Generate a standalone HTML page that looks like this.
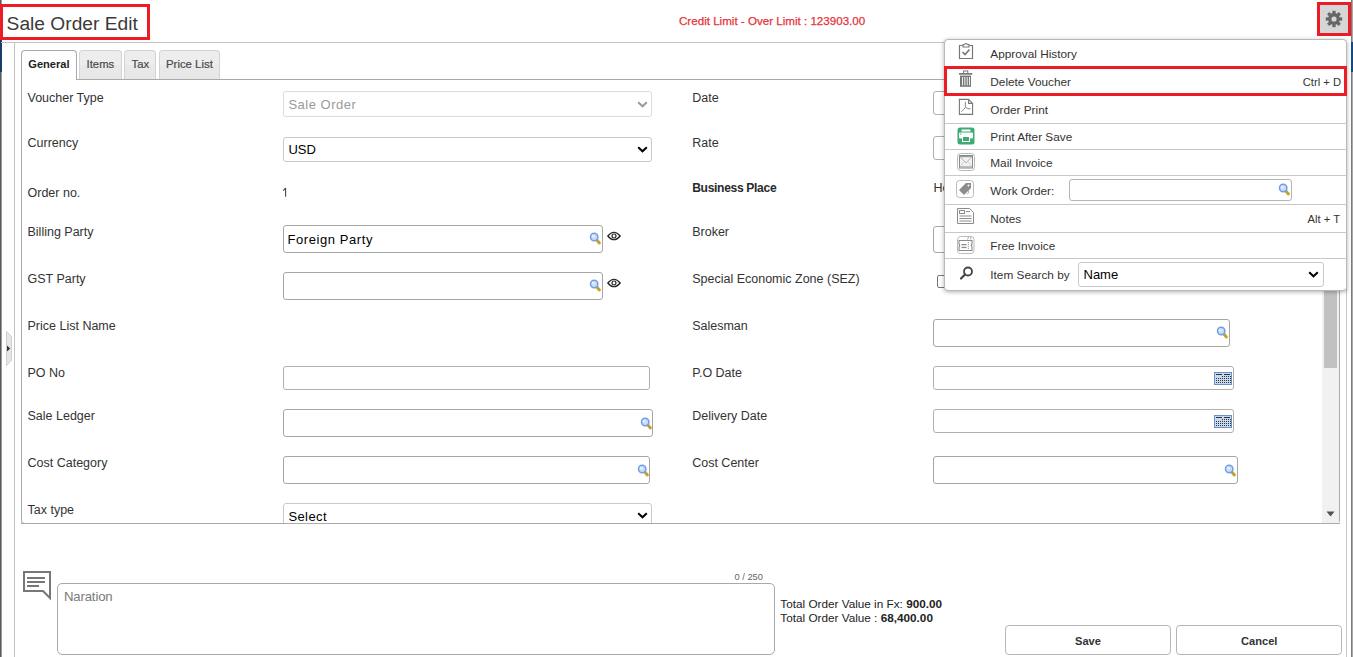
<!DOCTYPE html>
<html><head><meta charset="utf-8"><title>Sale Order Edit</title>
<style>
html,body{margin:0;padding:0;}
body{width:1353px;height:657px;overflow:hidden;position:relative;background:#fff;font-family:"Liberation Sans",sans-serif;}
.a{position:absolute;}
.t{position:absolute;line-height:1;white-space:nowrap;font-family:"Liberation Sans",sans-serif;}
svg.a{overflow:visible;}
</style></head><body>
<div class="a" style="left:0px;top:0px;width:1px;height:657px;background:#5a5a5a"></div>
<div class="a" style="left:1px;top:0px;width:1px;height:657px;background:#9a9a9a"></div>
<div class="a" style="left:0px;top:40px;width:2px;height:32px;background:#173e6b"></div>
<div class="a" style="left:1351px;top:0px;width:1px;height:657px;background:#7a7a7a"></div>
<div class="a" style="left:1352px;top:0px;width:1px;height:657px;background:#a8a8a8"></div>
<div class="a" style="left:1351px;top:42px;width:2px;height:30px;background:#0f4c86"></div>
<div class="a" style="left:0px;top:4px;width:150px;height:36px;border:3px solid #ed1c24;box-sizing:border-box"></div>
<div class="t" style="left:6.6px;top:14.35px;font-size:19.2px;color:#3a3a3a;font-weight:normal;">Sale Order Edit</div>
<div class="t" style="left:679px;top:14.98px;font-size:11.6px;color:#e5333a;font-weight:normal;-webkit-text-stroke:0.25px #e5333a;">Credit Limit - Over Limit : 123903.00</div>
<div class="a" style="left:1317px;top:2px;width:34px;height:34px;border:3px solid #ed1c24;box-sizing:border-box;background:#d6d6d6"></div>
<svg class="a" style="left:1325px;top:10px" width="18" height="18" viewBox="0 0 18 18">
<g fill="#666" transform="translate(9 9)">
<circle r="5.9"/>
<rect x="-1.6" y="-8.2" width="3.2" height="3.6" />
<rect x="-1.6" y="-8.2" width="3.2" height="3.6" transform="rotate(45)"/>
<rect x="-1.6" y="-8.2" width="3.2" height="3.6" transform="rotate(90)"/>
<rect x="-1.6" y="-8.2" width="3.2" height="3.6" transform="rotate(135)"/>
<rect x="-1.6" y="-8.2" width="3.2" height="3.6" transform="rotate(180)"/>
<rect x="-1.6" y="-8.2" width="3.2" height="3.6" transform="rotate(225)"/>
<rect x="-1.6" y="-8.2" width="3.2" height="3.6" transform="rotate(270)"/>
<rect x="-1.6" y="-8.2" width="3.2" height="3.6" transform="rotate(315)"/>
</g><circle cx="9" cy="9" r="2.6" fill="#d6d6d6"/></svg>
<div class="a" style="left:1px;top:42px;width:1346px;height:1px;background:#c4c4c4"></div>
<div class="a" style="left:14px;top:42px;width:1px;height:615px;background:#c4c4c4"></div>
<div class="a" style="left:1346px;top:42px;width:1px;height:615px;background:#c4c4c4"></div>
<svg class="a" style="left:6px;top:331px" width="7" height="36" viewBox="0 0 7 36"><path d="M0.5 0.5 L5.5 5.5 V29.5 L0.5 34.5Z" fill="#e6e6e6" stroke="#d0d0d0"/><path d="M1 14.5 L4.2 17.5 L1 20.5Z" fill="#333"/></svg>
<div class="a" style="left:21px;top:79px;width:1319px;height:445px;border:1px solid #aaa;border-top:1px solid #a9a9a9;box-sizing:border-box;border-radius:0 0 4px 4px;background:#fff"></div>
<div class="a" style="left:21px;top:50px;width:56px;height:30px;border:1px solid #aaa;border-bottom:none;box-sizing:border-box;border-radius:4px 4px 0 0;background:#fff"></div>
<div class="a" style="left:79px;top:50px;width:43px;height:29px;border:1px solid #d3d3d3;border-bottom:none;box-sizing:border-box;border-radius:4px 4px 0 0;background:linear-gradient(#ededed 0,#ededed 50%,#e8e8e8 50%,#e8e8e8 100%)"></div>
<div class="a" style="left:124px;top:50px;width:32px;height:29px;border:1px solid #d3d3d3;border-bottom:none;box-sizing:border-box;border-radius:4px 4px 0 0;background:linear-gradient(#ededed 0,#ededed 50%,#e8e8e8 50%,#e8e8e8 100%)"></div>
<div class="a" style="left:159px;top:50px;width:61px;height:29px;border:1px solid #d3d3d3;border-bottom:none;box-sizing:border-box;border-radius:4px 4px 0 0;background:linear-gradient(#ededed 0,#ededed 50%,#e8e8e8 50%,#e8e8e8 100%)"></div>
<div class="t" style="left:28.3px;top:58.80px;font-size:11.1px;color:#222;font-weight:bold;">General</div>
<div class="t" style="left:86.6px;top:58.63px;font-size:11.3px;color:#4a4a4a;font-weight:normal;-webkit-text-stroke:0.2px #4a4a4a;">Items</div>
<div class="t" style="left:131.5px;top:58.63px;font-size:11.3px;color:#4a4a4a;font-weight:normal;-webkit-text-stroke:0.2px #4a4a4a;">Tax</div>
<div class="t" style="left:166px;top:58.55px;font-size:11.4px;color:#4a4a4a;font-weight:normal;-webkit-text-stroke:0.2px #4a4a4a;">Price List</div>
<div class="t" style="left:27.5px;top:91.82px;font-size:12.5px;color:#333;font-weight:normal;">Voucher Type</div>
<div class="t" style="left:27.5px;top:136.62px;font-size:12.5px;color:#333;font-weight:normal;">Currency</div>
<div class="t" style="left:27.5px;top:187.32px;font-size:12.5px;color:#333;font-weight:normal;">Order no.</div>
<div class="t" style="left:27.5px;top:225.62px;font-size:12.5px;color:#333;font-weight:normal;">Billing Party</div>
<div class="t" style="left:27.5px;top:272.62px;font-size:12.5px;color:#333;font-weight:normal;">GST Party</div>
<div class="t" style="left:27.5px;top:319.52px;font-size:12.5px;color:#333;font-weight:normal;">Price List Name</div>
<div class="t" style="left:27.5px;top:366.52px;font-size:12.5px;color:#333;font-weight:normal;">PO No</div>
<div class="t" style="left:27.5px;top:409.72px;font-size:12.5px;color:#333;font-weight:normal;">Sale Ledger</div>
<div class="t" style="left:27.5px;top:456.62px;font-size:12.5px;color:#333;font-weight:normal;">Cost Category</div>
<div class="t" style="left:27.5px;top:504.22px;font-size:12.5px;color:#333;font-weight:normal;">Tax type</div>
<div class="t" style="left:692.2px;top:91.62px;font-size:12.5px;color:#333;font-weight:normal;">Date</div>
<div class="t" style="left:692.2px;top:136.62px;font-size:12.5px;color:#333;font-weight:normal;">Rate</div>
<div class="t" style="left:692.2px;top:225.62px;font-size:12.5px;color:#333;font-weight:normal;">Broker</div>
<div class="t" style="left:692.2px;top:272.82px;font-size:12.5px;color:#333;font-weight:normal;">Special Economic Zone (SEZ)</div>
<div class="t" style="left:692.2px;top:319.92px;font-size:12.5px;color:#333;font-weight:normal;">Salesman</div>
<div class="t" style="left:692.2px;top:366.92px;font-size:12.5px;color:#333;font-weight:normal;">P.O Date</div>
<div class="t" style="left:692.2px;top:409.92px;font-size:12.5px;color:#333;font-weight:normal;">Delivery Date</div>
<div class="t" style="left:692.2px;top:456.92px;font-size:12.5px;color:#333;font-weight:normal;">Cost Center</div>
<div class="t" style="left:692.2px;top:182.06px;font-size:12.1px;color:#2a2a2a;font-weight:bold;letter-spacing:-0.33px;">Business Place</div>
<svg class="a" style="left:282px;top:187px" width="6" height="11" viewBox="0 0 6 11"><path d="M3.6 1 V9.8 M3.6 1.2 L1.2 3.6" fill="none" stroke="#444" stroke-width="1.1"/></svg>
<div class="t" style="left:933.5px;top:181.82px;font-size:12.5px;color:#333;font-weight:normal;">Head Office</div>
<div class="a" style="left:283px;top:91px;width:369px;height:26px;border:1px solid #dcdcdc;box-sizing:border-box;border-radius:3px;background:#fff"></div>
<div class="t" style="left:288.4px;top:97.90px;font-size:13px;color:#9a9a9a;font-weight:normal;letter-spacing:0.5px;">Sale Order</div>
<svg class="a" style="left:636.5px;top:100.5px" width="11" height="7" viewBox="0 0 11 7"><path d="M1.2 1.2 L5.5 5.3 L9.8 1.2" fill="none" stroke="#9a9a9a" stroke-width="2"/></svg>
<div class="a" style="left:283px;top:137px;width:369px;height:25px;border:1px solid #c9c9c9;box-sizing:border-box;border-radius:3px;background:#fff"></div>
<div class="t" style="left:288.4px;top:143.10px;font-size:13px;color:#000;font-weight:normal;">USD</div>
<svg class="a" style="left:636.5px;top:146px" width="11" height="7" viewBox="0 0 11 7"><path d="M1.2 1.2 L5.5 5.3 L9.8 1.2" fill="none" stroke="#000" stroke-width="2"/></svg>
<div class="a" style="left:283px;top:225px;width:320px;height:28px;border:1px solid #a6a6a6;box-sizing:border-box;border-radius:3px;background:#fff"></div>
<div class="t" style="left:287.4px;top:233.40px;font-size:13px;color:#000;font-weight:normal;letter-spacing:0.58px;">Foreign Party</div>
<svg class="a" style="left:589px;top:232px" width="12" height="12" viewBox="0 0 12 12">
<line x1="7.4" y1="7.6" x2="10.4" y2="10.9" stroke="#c4a12a" stroke-width="3" stroke-linecap="round"/>
<circle cx="5.2" cy="5" r="3.7" fill="#c9dbf7" stroke="#6f9de8" stroke-width="1.5"/>
<circle cx="4.2" cy="4.2" r="1.4" fill="#e8f0fc"/></svg>
<svg class="a" style="left:607px;top:231px" width="14" height="10" viewBox="0 0 14 10">
<path d="M0.8 5 Q7 -2.5 13.2 5 Q7 12.5 0.8 5Z" fill="none" stroke="#222" stroke-width="1.2"/>
<circle cx="7" cy="5" r="2" fill="none" stroke="#222" stroke-width="1.2"/></svg>
<div class="a" style="left:283px;top:272px;width:320px;height:28px;border:1px solid #a6a6a6;box-sizing:border-box;border-radius:3px;background:#fff"></div>
<svg class="a" style="left:589px;top:279px" width="12" height="12" viewBox="0 0 12 12">
<line x1="7.4" y1="7.6" x2="10.4" y2="10.9" stroke="#c4a12a" stroke-width="3" stroke-linecap="round"/>
<circle cx="5.2" cy="5" r="3.7" fill="#c9dbf7" stroke="#6f9de8" stroke-width="1.5"/>
<circle cx="4.2" cy="4.2" r="1.4" fill="#e8f0fc"/></svg>
<svg class="a" style="left:607px;top:278px" width="14" height="10" viewBox="0 0 14 10">
<path d="M0.8 5 Q7 -2.5 13.2 5 Q7 12.5 0.8 5Z" fill="none" stroke="#222" stroke-width="1.2"/>
<circle cx="7" cy="5" r="2" fill="none" stroke="#222" stroke-width="1.2"/></svg>
<div class="a" style="left:283px;top:366px;width:367px;height:24px;border:1px solid #b0b0b0;box-sizing:border-box;border-radius:3px;background:#fff"></div>
<div class="a" style="left:283px;top:409px;width:370px;height:28px;border:1px solid #a6a6a6;box-sizing:border-box;border-radius:3px;background:#fff"></div>
<svg class="a" style="left:640px;top:417px" width="12" height="12" viewBox="0 0 12 12">
<line x1="7.4" y1="7.6" x2="10.4" y2="10.9" stroke="#c4a12a" stroke-width="3" stroke-linecap="round"/>
<circle cx="5.2" cy="5" r="3.7" fill="#c9dbf7" stroke="#6f9de8" stroke-width="1.5"/>
<circle cx="4.2" cy="4.2" r="1.4" fill="#e8f0fc"/></svg>
<div class="a" style="left:283px;top:456px;width:367px;height:28px;border:1px solid #a6a6a6;box-sizing:border-box;border-radius:3px;background:#fff"></div>
<svg class="a" style="left:637px;top:464px" width="12" height="12" viewBox="0 0 12 12">
<line x1="7.4" y1="7.6" x2="10.4" y2="10.9" stroke="#c4a12a" stroke-width="3" stroke-linecap="round"/>
<circle cx="5.2" cy="5" r="3.7" fill="#c9dbf7" stroke="#6f9de8" stroke-width="1.5"/>
<circle cx="4.2" cy="4.2" r="1.4" fill="#e8f0fc"/></svg>
<div class="a" style="left:283px;top:503px;width:369px;height:37px;border:1px solid #c9c9c9;box-sizing:border-box;border-radius:3px;background:#fff"></div>
<div class="t" style="left:288.4px;top:509.90px;font-size:13px;color:#000;font-weight:normal;letter-spacing:0.4px;">Select</div>
<svg class="a" style="left:636.5px;top:512px" width="11" height="7" viewBox="0 0 11 7"><path d="M1.2 1.2 L5.5 5.3 L9.8 1.2" fill="none" stroke="#000" stroke-width="2"/></svg>
<div class="a" style="left:933px;top:91px;width:307px;height:24px;border:1px solid #b0b0b0;box-sizing:border-box;border-radius:3px;background:#fff"></div>
<div class="a" style="left:933px;top:136px;width:307px;height:24px;border:1px solid #b0b0b0;box-sizing:border-box;border-radius:3px;background:#fff"></div>
<div class="a" style="left:933px;top:226px;width:307px;height:27px;border:1px solid #a6a6a6;box-sizing:border-box;border-radius:3px;background:#fff"></div>
<div class="a" style="left:937px;top:275px;width:12px;height:13px;border:1px solid #767676;box-sizing:border-box;border-radius:2px;background:#fff"></div>
<div class="a" style="left:933px;top:319px;width:297px;height:28px;border:1px solid #a6a6a6;box-sizing:border-box;border-radius:3px;background:#fff"></div>
<svg class="a" style="left:1216px;top:326px" width="12" height="12" viewBox="0 0 12 12">
<line x1="7.4" y1="7.6" x2="10.4" y2="10.9" stroke="#c4a12a" stroke-width="3" stroke-linecap="round"/>
<circle cx="5.2" cy="5" r="3.7" fill="#c9dbf7" stroke="#6f9de8" stroke-width="1.5"/>
<circle cx="4.2" cy="4.2" r="1.4" fill="#e8f0fc"/></svg>
<div class="a" style="left:933px;top:366px;width:301px;height:24px;border:1px solid #b0b0b0;box-sizing:border-box;border-radius:3px;background:#fff"></div>
<svg class="a" style="left:1214px;top:372px" width="18" height="13" viewBox="0 0 18 13">
<rect x="0.5" y="0.5" width="17" height="12" fill="#c7d9f1" stroke="#6a91c9"/>
<rect x="2" y="2" width="6" height="1" fill="#333"/><rect x="10" y="2" width="6" height="1" fill="#333"/><rect x="8" y="4" width="1" height="1" fill="#333"/><rect x="10" y="4" width="1" height="1" fill="#333"/><rect x="12" y="4" width="1" height="1" fill="#333"/><rect x="14" y="4" width="1" height="1" fill="#333"/><rect x="16" y="4" width="1" height="1" fill="#333"/><rect x="2" y="6" width="1" height="1" fill="#333"/><rect x="4" y="6" width="1" height="1" fill="#333"/><rect x="6" y="6" width="1" height="1" fill="#333"/><rect x="8" y="6" width="1" height="1" fill="#333"/><rect x="10" y="6" width="1" height="1" fill="#333"/><rect x="12" y="6" width="1" height="1" fill="#333"/><rect x="14" y="6" width="1" height="1" fill="#333"/><rect x="16" y="6" width="1" height="1" fill="#333"/><rect x="2" y="8" width="1" height="1" fill="#333"/><rect x="4" y="8" width="1" height="1" fill="#333"/><rect x="6" y="8" width="1" height="1" fill="#333"/><rect x="8" y="8" width="1" height="1" fill="#333"/><rect x="10" y="8" width="1" height="1" fill="#333"/><rect x="12" y="8" width="1" height="1" fill="#333"/><rect x="14" y="8" width="1" height="1" fill="#333"/><rect x="16" y="8" width="1" height="1" fill="#333"/><rect x="2" y="10" width="1" height="1" fill="#333"/><rect x="4" y="10" width="1" height="1" fill="#333"/><rect x="6" y="10" width="1" height="1" fill="#333"/><rect x="8" y="10" width="1" height="1" fill="#333"/><rect x="10" y="10" width="1" height="1" fill="#333"/><rect x="12" y="10" width="1" height="1" fill="#333"/><rect x="14" y="10" width="1" height="1" fill="#333"/><rect x="16" y="10" width="1" height="1" fill="#333"/></svg>
<div class="a" style="left:933px;top:409px;width:301px;height:24px;border:1px solid #b0b0b0;box-sizing:border-box;border-radius:3px;background:#fff"></div>
<svg class="a" style="left:1214px;top:415px" width="18" height="13" viewBox="0 0 18 13">
<rect x="0.5" y="0.5" width="17" height="12" fill="#c7d9f1" stroke="#6a91c9"/>
<rect x="2" y="2" width="6" height="1" fill="#333"/><rect x="10" y="2" width="6" height="1" fill="#333"/><rect x="8" y="4" width="1" height="1" fill="#333"/><rect x="10" y="4" width="1" height="1" fill="#333"/><rect x="12" y="4" width="1" height="1" fill="#333"/><rect x="14" y="4" width="1" height="1" fill="#333"/><rect x="16" y="4" width="1" height="1" fill="#333"/><rect x="2" y="6" width="1" height="1" fill="#333"/><rect x="4" y="6" width="1" height="1" fill="#333"/><rect x="6" y="6" width="1" height="1" fill="#333"/><rect x="8" y="6" width="1" height="1" fill="#333"/><rect x="10" y="6" width="1" height="1" fill="#333"/><rect x="12" y="6" width="1" height="1" fill="#333"/><rect x="14" y="6" width="1" height="1" fill="#333"/><rect x="16" y="6" width="1" height="1" fill="#333"/><rect x="2" y="8" width="1" height="1" fill="#333"/><rect x="4" y="8" width="1" height="1" fill="#333"/><rect x="6" y="8" width="1" height="1" fill="#333"/><rect x="8" y="8" width="1" height="1" fill="#333"/><rect x="10" y="8" width="1" height="1" fill="#333"/><rect x="12" y="8" width="1" height="1" fill="#333"/><rect x="14" y="8" width="1" height="1" fill="#333"/><rect x="16" y="8" width="1" height="1" fill="#333"/><rect x="2" y="10" width="1" height="1" fill="#333"/><rect x="4" y="10" width="1" height="1" fill="#333"/><rect x="6" y="10" width="1" height="1" fill="#333"/><rect x="8" y="10" width="1" height="1" fill="#333"/><rect x="10" y="10" width="1" height="1" fill="#333"/><rect x="12" y="10" width="1" height="1" fill="#333"/><rect x="14" y="10" width="1" height="1" fill="#333"/><rect x="16" y="10" width="1" height="1" fill="#333"/></svg>
<div class="a" style="left:933px;top:456px;width:305px;height:28px;border:1px solid #a6a6a6;box-sizing:border-box;border-radius:3px;background:#fff"></div>
<svg class="a" style="left:1224px;top:464px" width="12" height="12" viewBox="0 0 12 12">
<line x1="7.4" y1="7.6" x2="10.4" y2="10.9" stroke="#c4a12a" stroke-width="3" stroke-linecap="round"/>
<circle cx="5.2" cy="5" r="3.7" fill="#c9dbf7" stroke="#6f9de8" stroke-width="1.5"/>
<circle cx="4.2" cy="4.2" r="1.4" fill="#e8f0fc"/></svg>
<div class="a" style="left:22px;top:524px;width:1317px;height:21px;background:#fff"></div>
<div class="a" style="left:21px;top:523px;width:1319px;height:1px;background:#aaa"></div>
<div class="a" style="left:1322px;top:80px;width:17px;height:443px;background:#f1f1f1"></div>
<div class="a" style="left:1324px;top:80px;width:13px;height:288px;background:#c1c1c1"></div>
<svg class="a" style="left:1326px;top:511px" width="9" height="6" viewBox="0 0 9 6"><path d="M0.5 0.5 L8.5 0.5 L4.5 5.5Z" fill="#505050"/></svg>
<svg class="a" style="left:22px;top:570px" width="31" height="31" viewBox="0 0 31 31">
<path d="M2 2 H28 V28 L21 21 H2 Z" fill="none" stroke="#777" stroke-width="2"/>
<rect x="5" y="7" width="18" height="2" fill="#777"/><rect x="5" y="11" width="18" height="2" fill="#777"/><rect x="5" y="15" width="12" height="2" fill="#777"/></svg>
<div class="a" style="left:57px;top:583px;width:718px;height:72px;border:1px solid #a9a9a9;box-sizing:border-box;border-radius:5px;background:#fff"></div>
<div class="t" style="left:63.9px;top:590.43px;font-size:13.2px;color:#7a7a7a;font-weight:normal;letter-spacing:-0.15px;">Naration</div>
<div class="t" style="left:734.5px;top:573.33px;font-size:9.3px;color:#666;font-weight:normal;">0 / 250</div>
<div class="t" style="left:780.3px;top:598.25px;font-size:11.75px;color:#222;font-weight:normal;">Total Order Value in Fx: <b>900.00</b></div>
<div class="t" style="left:780.3px;top:612.25px;font-size:11.75px;color:#222;font-weight:normal;">Total Order Value : <b>68,400.00</b></div>
<div class="a" style="left:1005px;top:625px;width:166px;height:30px;border:1px solid #b5b5b5;box-sizing:border-box;border-radius:4px;background:#fff"></div>
<div class="t" style="left:1075px;top:636.20px;font-size:11.1px;color:#333;font-weight:bold;">Save</div>
<div class="a" style="left:1176px;top:625px;width:166px;height:30px;border:1px solid #b5b5b5;box-sizing:border-box;border-radius:4px;background:#fff"></div>
<div class="t" style="left:1241px;top:636.20px;font-size:11.1px;color:#333;font-weight:bold;">Cancel</div>
<div class="a" style="left:944px;top:39px;width:403px;height:252px;border:1px solid #b9b9b9;box-sizing:border-box;border-radius:4px;background:#fff;box-shadow:0 1px 4px rgba(0,0,0,0.32)"></div>
<div class="a" style="left:945px;top:123px;width:401px;height:1px;background:#c8c8c8"></div>
<div class="a" style="left:945px;top:149px;width:401px;height:1px;background:#c8c8c8"></div>
<div class="a" style="left:945px;top:175px;width:401px;height:1px;background:#c8c8c8"></div>
<div class="a" style="left:945px;top:204px;width:401px;height:1px;background:#c8c8c8"></div>
<div class="a" style="left:945px;top:232px;width:401px;height:1px;background:#c8c8c8"></div>
<div class="a" style="left:945px;top:258px;width:401px;height:1px;background:#c8c8c8"></div>
<div class="t" style="left:990.3px;top:49.21px;font-size:11.8px;color:#333;font-weight:normal;">Approval History</div>
<div class="t" style="left:990.3px;top:76.91px;font-size:11.8px;color:#333;font-weight:normal;">Delete Voucher</div>
<div class="t" style="left:990.3px;top:105.11px;font-size:11.8px;color:#333;font-weight:normal;">Order Print</div>
<div class="t" style="left:990.3px;top:131.71px;font-size:11.8px;color:#333;font-weight:normal;">Print After Save</div>
<div class="t" style="left:990.3px;top:158.11px;font-size:11.8px;color:#333;font-weight:normal;">Mail Invoice</div>
<div class="t" style="left:990.3px;top:186.21px;font-size:11.8px;color:#333;font-weight:normal;">Work Order:</div>
<div class="t" style="left:990.3px;top:214.41px;font-size:11.8px;color:#333;font-weight:normal;">Notes</div>
<div class="t" style="left:990.3px;top:241.01px;font-size:11.8px;color:#333;font-weight:normal;">Free Invoice</div>
<div class="t" style="left:990.3px;top:270.01px;font-size:11.8px;color:#333;font-weight:normal;">Item Search by</div>
<div class="t" style="right:12px;top:77.42px;font-size:11.2px;color:#333">Ctrl + D</div>
<div class="t" style="right:13px;top:214.42px;font-size:11.2px;color:#333">Alt + T</div>
<div class="a" style="left:1069px;top:179px;width:223px;height:22px;border:1px solid #b5b5b5;box-sizing:border-box;border-radius:3px;background:#fff"></div>
<svg class="a" style="left:1278px;top:183.2px" width="12" height="12" viewBox="0 0 12 12">
<line x1="7.4" y1="7.6" x2="10.4" y2="10.9" stroke="#c4a12a" stroke-width="3" stroke-linecap="round"/>
<circle cx="5.2" cy="5" r="3.7" fill="#c9dbf7" stroke="#6f9de8" stroke-width="1.5"/>
<circle cx="4.2" cy="4.2" r="1.4" fill="#e8f0fc"/></svg>
<div class="a" style="left:1078px;top:262px;width:246px;height:25px;border:1px solid #c9c9c9;box-sizing:border-box;border-radius:3px;background:#fff"></div>
<div class="t" style="left:1083.5px;top:267.60px;font-size:13px;color:#000;font-weight:normal;">Name</div>
<svg class="a" style="left:1308px;top:271px" width="11" height="7" viewBox="0 0 11 7"><path d="M1.2 1.2 L5.5 5.3 L9.8 1.2" fill="none" stroke="#000" stroke-width="2"/></svg>
<div class="a" style="left:944px;top:66px;width:403px;height:30px;border:3px solid #ed1c24;box-sizing:border-box"></div>
<svg class="a" style="left:958px;top:42px" width="16" height="18" viewBox="0 0 16 18">
<path d="M4.5 3.5 H1.5 V16.5 H14.5 V3.5 H11.5" fill="none" stroke="#777" stroke-width="1.2"/>
<path d="M5 2.5 H6.5 Q8 0.5 9.5 2.5 H11 V5 H5Z" fill="none" stroke="#777" stroke-width="1.2"/>
<path d="M4.5 10 L7 12.5 L11.5 7.5" fill="none" stroke="#777" stroke-width="1.6"/></svg>
<svg class="a" style="left:958px;top:70px" width="16" height="18" viewBox="0 0 16 18">
<rect x="1" y="3" width="13.3" height="1.7" fill="#777"/><rect x="5.5" y="1" width="4.3" height="2.5" fill="none" stroke="#777" stroke-width="1"/>
<rect x="2" y="5.6" width="11" height="11.2" fill="#777"/>
<rect x="4.1" y="7" width="0.9" height="8.4" fill="#fff"/><rect x="6.4" y="7" width="0.9" height="8.4" fill="#fff"/><rect x="8.7" y="7" width="0.9" height="8.4" fill="#fff"/><rect x="11" y="7" width="0.9" height="8.4" fill="#fff"/></svg>
<svg class="a" style="left:958px;top:98px" width="16" height="18" viewBox="0 0 16 18">
<path d="M1.4 1.4 H10.6 L14.6 5.4 V16.4 H1.4Z" fill="none" stroke="#777" stroke-width="1.1"/>
<path d="M10.6 1.4 V5.4 H14.6" fill="none" stroke="#777" stroke-width="1.1"/>
<path d="M7.4 3.8 Q7.2 7 7.4 9.4 Q5.5 12 3.4 13.6 M7.4 9.4 Q9.6 10.8 12.6 11" fill="none" stroke="#888" stroke-width="1"/></svg>
<svg class="a" style="left:957px;top:127px" width="18" height="18" viewBox="0 0 18 18">
<rect x="0.5" y="0.5" width="17" height="17" rx="2.5" fill="#3dab73"/>
<rect x="4.5" y="2.5" width="9" height="2" fill="#fff"/>
<rect x="2" y="5.5" width="14" height="6" rx="1" fill="#fff"/>
<rect x="5.5" y="9.5" width="7" height="5" fill="#3dab73" stroke="#fff" stroke-width="1"/>
<circle cx="3.8" cy="7" r="0.7" fill="#3dab73"/></svg>
<svg class="a" style="left:957px;top:153px" width="18" height="18" viewBox="0 0 18 18">
<rect x="0.5" y="0.5" width="17" height="17" rx="3" fill="none" stroke="#bbb"/>
<rect x="2.5" y="2.5" width="13" height="12.5" fill="#f2f2f2" stroke="#8a8a8a"/>
<rect x="3" y="3" width="12" height="1.2" fill="#999"/><rect x="3" y="13.3" width="12" height="1.2" fill="#aaa"/>
<path d="M3 3.5 L9 10 L15 3.5" fill="none" stroke="#a0a0a0" stroke-width="0.8"/>
<path d="M3 14 L7.2 8.5 M15 14 L10.8 8.5" fill="none" stroke="#bdbdbd" stroke-width="0.6"/></svg>
<svg class="a" style="left:956px;top:180px" width="18" height="18" viewBox="0 0 18 18">
<rect x="0.5" y="0.5" width="17" height="17" rx="3" fill="none" stroke="#bbb"/>
<path d="M3 10 L10 3 H15 V8 L8 15Z" fill="#8c8c8c"/><circle cx="12.5" cy="5.5" r="1" fill="#fff"/>
<path d="M12 10 Q14 13 11 14" fill="none" stroke="#999" stroke-width="0.8"/></svg>
<svg class="a" style="left:957px;top:208px" width="17" height="16" viewBox="0 0 17 16">
<path d="M0.5 0.5 H12.5 L16.5 4.5 V15.5 H0.5Z" fill="#fff" stroke="#8c8c8c"/>
<rect x="2.5" y="2.5" width="5" height="3" fill="none" stroke="#8c8c8c"/>
<rect x="9" y="3" width="4" height="1" fill="#8c8c8c"/>
<rect x="2.5" y="7.5" width="12" height="1" fill="#8c8c8c"/><rect x="2.5" y="10" width="12" height="1" fill="#8c8c8c"/><rect x="2.5" y="12.5" width="12" height="1" fill="#8c8c8c"/></svg>
<svg class="a" style="left:957px;top:236px" width="18" height="18" viewBox="0 0 18 18">
<rect x="0.5" y="0.5" width="16.5" height="17" rx="3" fill="none" stroke="#bbb"/>
<path d="M2 4.5 H15 V8 Q13.5 9.5 15 11 V14.5 H2 V11 Q3.5 9.5 2 8Z" fill="none" stroke="#8c8c8c" stroke-width="1.1"/>
<rect x="4.5" y="8" width="5" height="1.3" fill="#8c8c8c"/><rect x="4.5" y="10.8" width="5" height="1.3" fill="#8c8c8c"/>
<path d="M11.3 6 V13" stroke="#8c8c8c" stroke-width="0.9" stroke-dasharray="1.2 0.8"/>
<path d="M10.5 3.5 L11.5 1 M13.5 3.5 L13.8 1" stroke="#8c8c8c" stroke-width="0.7"/></svg>
<svg class="a" style="left:959px;top:266px" width="15" height="14" viewBox="0 0 15 14">
<circle cx="9" cy="5.5" r="4" fill="none" stroke="#444" stroke-width="1.8"/>
<line x1="6" y1="8.5" x2="2" y2="12.5" stroke="#444" stroke-width="2.2" stroke-linecap="round"/></svg>
</body></html>
